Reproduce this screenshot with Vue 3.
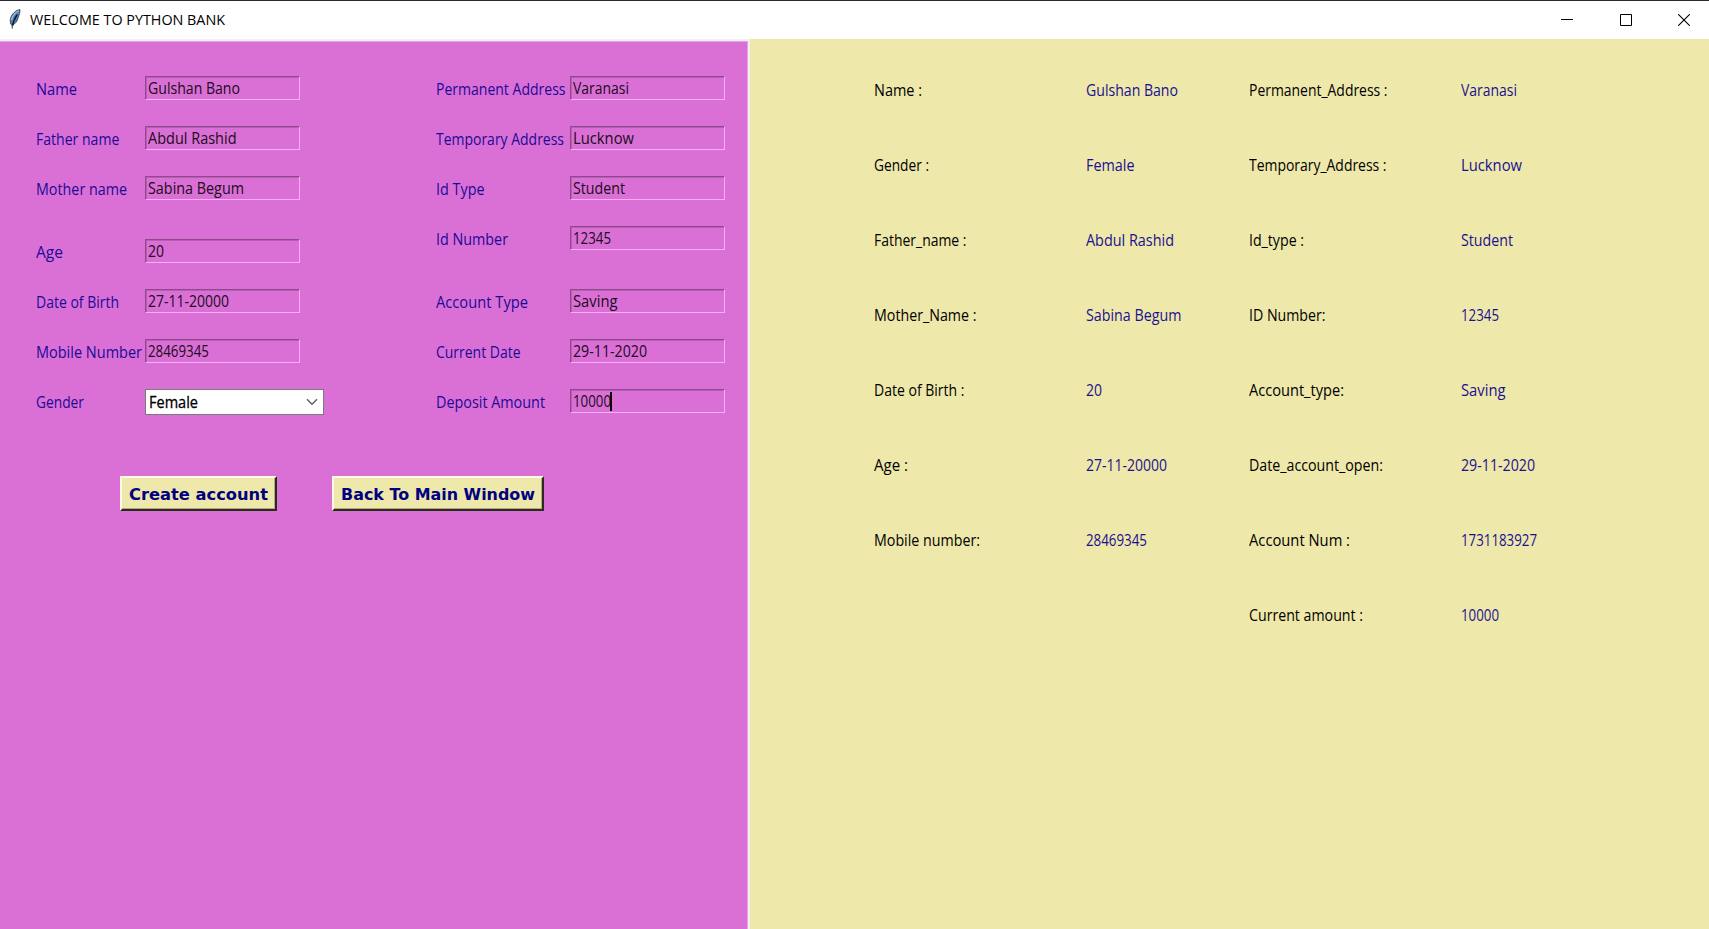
<script setup>
const personal = [
  { label: 'Name', lw: 40, value: 'Gulshan Bano', vw: 91 },
  { label: 'Father name', lw: 82.3, value: 'Abdul Rashid', vw: 87.5 },
  { label: 'Mother name', lw: 90, value: 'Sabina Begum', vw: 95 },
  { label: 'Age', lw: 26, value: '20', vw: 15, spaced: true },
  { label: 'Date of Birth', lw: 82, value: '27-11-20000', vw: 80 },
  { label: 'Mobile Number', lw: 105, value: '28469345', vw: 60 },
]

const account = [
  { label: 'Permanent Address', lw: 128.5, value: 'Varanasi', vw: 55 },
  { label: 'Temporary Address', lw: 127, value: 'Lucknow', vw: 60 },
  { label: 'Id Type', lw: 47.5, value: 'Student', vw: 51 },
  { label: 'Id Number', lw: 71, value: '12345', vw: 37 },
  { label: 'Account Type', lw: 91, value: 'Saving', vw: 43.5, spaced: true },
  { label: 'Current Date', lw: 83.5, value: '29-11-2020', vw: 73 },
  { label: 'Deposit Amount', lw: 108, value: '10000', vw: 37, caret: true },
]

const summary = [
  [['Name :', 47], ['Gulshan Bano', 91], ['Permanent_Address :', 137.5], ['Varanasi', 55]],
  [['Gender :', 54], ['Female', 47.5], ['Temporary_Address :', 136.5], ['Lucknow', 60]],
  [['Father_name :', 91.5], ['Abdul Rashid', 87], ['Id_type :', 54], ['Student', 51]],
  [['Mother_Name :', 101.5], ['Sabina Begum', 94.5], ['ID Number:', 75.5], ['12345', 37]],
  [['Date of Birth :', 89.5], ['20', 15], ['Account_type:', 94], ['Saving', 43.5]],
  [['Age :', 33], ['27-11-20000', 80], ['Date_account_open:', 133], ['29-11-2020', 73]],
  [['Mobile number:', 105], ['28469345', 60], ['Account Num :', 100], ['1731183927', 75]],
  [['', 0], ['', 0], ['Current amount :', 113], ['10000', 37]],
]

// Condenses a text run horizontally so that it takes the given width.
const vFit = {
  mounted(el, { value }) {
    const natural = el.getBoundingClientRect().width
    if (natural && value) el.style.transform = `scaleX(${(value + 1) / natural})`
  },
}
</script>

<template>
  <div class="window">
    <header class="titlebar">
      <svg class="feather" width="12" height="20" viewBox="0 0 12 20">
        <path d="M10.900.6C7 1.200 2.800 4.800 1.600 9.200c-.5 2.200-.3 4.400.2 6l1.400 1.200c3-1.500 5.300-4.500 6-7.800C10.200 6 11.200 3 10.900.6z" fill="#4b84c0" stroke="#3a424c" stroke-width=".9" />
        <path d="M10 1.800C6.500 3.500 3.400 7 2.500 11" fill="none" stroke="#a9c0d8" stroke-width="1.200" />
        <path d="M8.300 5.500C6 8.600 4.200 12.500 3.300 18" fill="none" stroke="#15191f" stroke-width="1.400" />
        <path d="M3.300 16.500v3.200" stroke="#777" stroke-width="1.300" />
      </svg>
      <span v-fit="194" class="fit title">WELCOME TO PYTHON BANK</span>
      <div class="controls">
        <svg width="12" height="12" viewBox="0 0 12 12"><path d="M0 5.500h12" stroke="#000" /></svg>
        <svg width="12" height="12" viewBox="0 0 12 12"><path d="M.5.5h11v11H.5z" fill="none" stroke="#000" /></svg>
        <svg width="12" height="12" viewBox="0 0 12 12"><path d="M.2.2l11.600 11.600M11.800.2L.2 11.800" stroke="#000" stroke-width="1.100" /></svg>
      </div>
    </header>

    <main class="body">
      <section class="form">
        <div class="columns">
          <div class="col first">
            <div v-for="f in personal" :key="f.label" class="row" :class="{ spaced: f.spaced }">
              <label class="label"><span v-fit="f.lw" class="fit">{{ f.label }}</span></label>
              <div class="entry"><span v-fit="f.vw" class="fit">{{ f.value }}</span></div>
            </div>
            <div class="row">
              <label class="label"><span v-fit="47" class="fit">Gender</span></label>
              <div class="combo">
                <span v-fit="48" class="fit">Female</span>
                <svg width="12" height="8" viewBox="0 0 12 8"><path d="M1 1.200l5 5 5-5" fill="none" stroke="#606060" stroke-width="1.400" /></svg>
              </div>
            </div>
          </div>
          <div class="col second">
            <div v-for="f in account" :key="f.label" class="row" :class="{ spaced: f.spaced }">
              <label class="label"><span v-fit="f.lw" class="fit">{{ f.label }}</span></label>
              <div class="entry">
                <span v-fit="f.vw" class="fit">{{ f.value }}</span>
                <i v-if="f.caret" class="caret"></i>
              </div>
            </div>
          </div>
        </div>
        <div class="actions">
          <button class="btn create"><span v-fit="138" class="fit">Create account</span></button>
          <button class="btn back"><span v-fit="193" class="fit">Back To Main Window</span></button>
        </div>
      </section>

      <section class="summary">
        <div v-for="(line, i) in summary" :key="i" class="line">
          <div v-for="(cell, j) in line" :key="j" :class="j % 2 ? 'value' : 'key'">
            <span v-fit="cell[1]" class="fit">{{ cell[0] }}</span>
          </div>
        </div>
      </section>
    </main>
  </div>
</template>

<style>
body {
  margin: 0;
  overflow: hidden;
}
</style>

<style scoped>
.window {
  width: 1709px;
  height: 929px;
  display: flex;
  flex-direction: column;
  background: #f0f0f0;
  font-family: "Open Sans", "Noto Sans", sans-serif;
  font-size: 15.5px;
  line-height: 24px;
  color: #000;
}
.fit {
  display: inline-block;
  white-space: nowrap;
  transform-origin: 0 50%;
}
.titlebar {
  box-sizing: border-box;
  height: 39px;
  flex: none;
  display: flex;
  align-items: center;
  padding: 0 19px 0 9px;
  border-top: 1px solid #2b2b2b;
  background: #fff;
}
.feather {
  margin: 0 9px 2px 0;
}
.title {
  font-size: 15px;
  padding-bottom: 2px;
}
.controls {
  margin-left: auto;
  display: flex;
  gap: 46.5px;
}
.controls svg {
  display: block;
}
.body {
  flex: 1;
  display: flex;
  min-height: 0;
}
.form {
  box-sizing: border-box;
  width: 748px;
  margin: 2px 2px 0 0;
  border-top: 1px solid #e6a3e4;
  border-right: 1px solid #e6a3e4;
  background: #da70d6;
  padding-top: 34px;
}
.columns {
  display: flex;
  height: 400px;
}
.col {
  display: flex;
  flex-direction: column;
  gap: 26px;
}
.first {
  width: 400px;
  padding-left: 36px;
}
.row {
  display: flex;
  height: 24px;
}
.row.spaced {
  margin-top: 12.6px;
}
.label {
  padding-top: 1.3px;
  color: #1c0a94;
}
.first .label {
  width: 109px;
}
.second .label {
  width: 134px;
}
.entry {
  box-sizing: border-box;
  width: 155px;
  height: 24px;
  display: flex;
  padding-left: 1.5px;
  border: 1px solid;
  border-color: #8f4a8d #f9aef7 #f9aef7 #8f4a8d;
  box-shadow: inset 1px 1px #b75eb4;
  line-height: 22px;
  position: relative;
  color: #1c0a20;
}
.caret {
  position: absolute;
  left: 38.500px;
  top: 2px;
  width: 2px;
  height: 19px;
  background: #000;
}
.combo {
  box-sizing: border-box;
  width: 179px;
  height: 26px;
  flex: none;
  display: flex;
  align-items: center;
  justify-content: space-between;
  padding: 0 5px 0 3px;
  border: 1px solid #7a7a7a;
  background: #fff;
  -webkit-text-stroke: 0.3px #000;
}
.actions {
  display: flex;
  padding-left: 120px;
}
.btn {
  box-sizing: border-box;
  height: 35px;
  margin: 0;
  padding: 1px 0 0 7px;
  border: 2px solid;
  border-color: #fbf9e6 #2b2a20 #2b2a20 #fbf9e6;
  box-shadow: inset -1px -1px #b0ab80;
  background: #eee8aa;
  color: #000080;
  font: bold 16px/29px "DejaVu Sans", sans-serif;
  text-align: left;
}
.create {
  width: 157px;
}
.back {
  width: 212px;
  margin-left: 55px;
}
.summary {
  flex: 1;
  background: #eee8aa;
  padding: 38.600px 0 0 123.500px;
}
.line {
  display: grid;
  grid-template-columns: 212.5px 163px 212px 200px;
  height: 75px;
}
.value {
  color: #1a1090;
}
</style>
